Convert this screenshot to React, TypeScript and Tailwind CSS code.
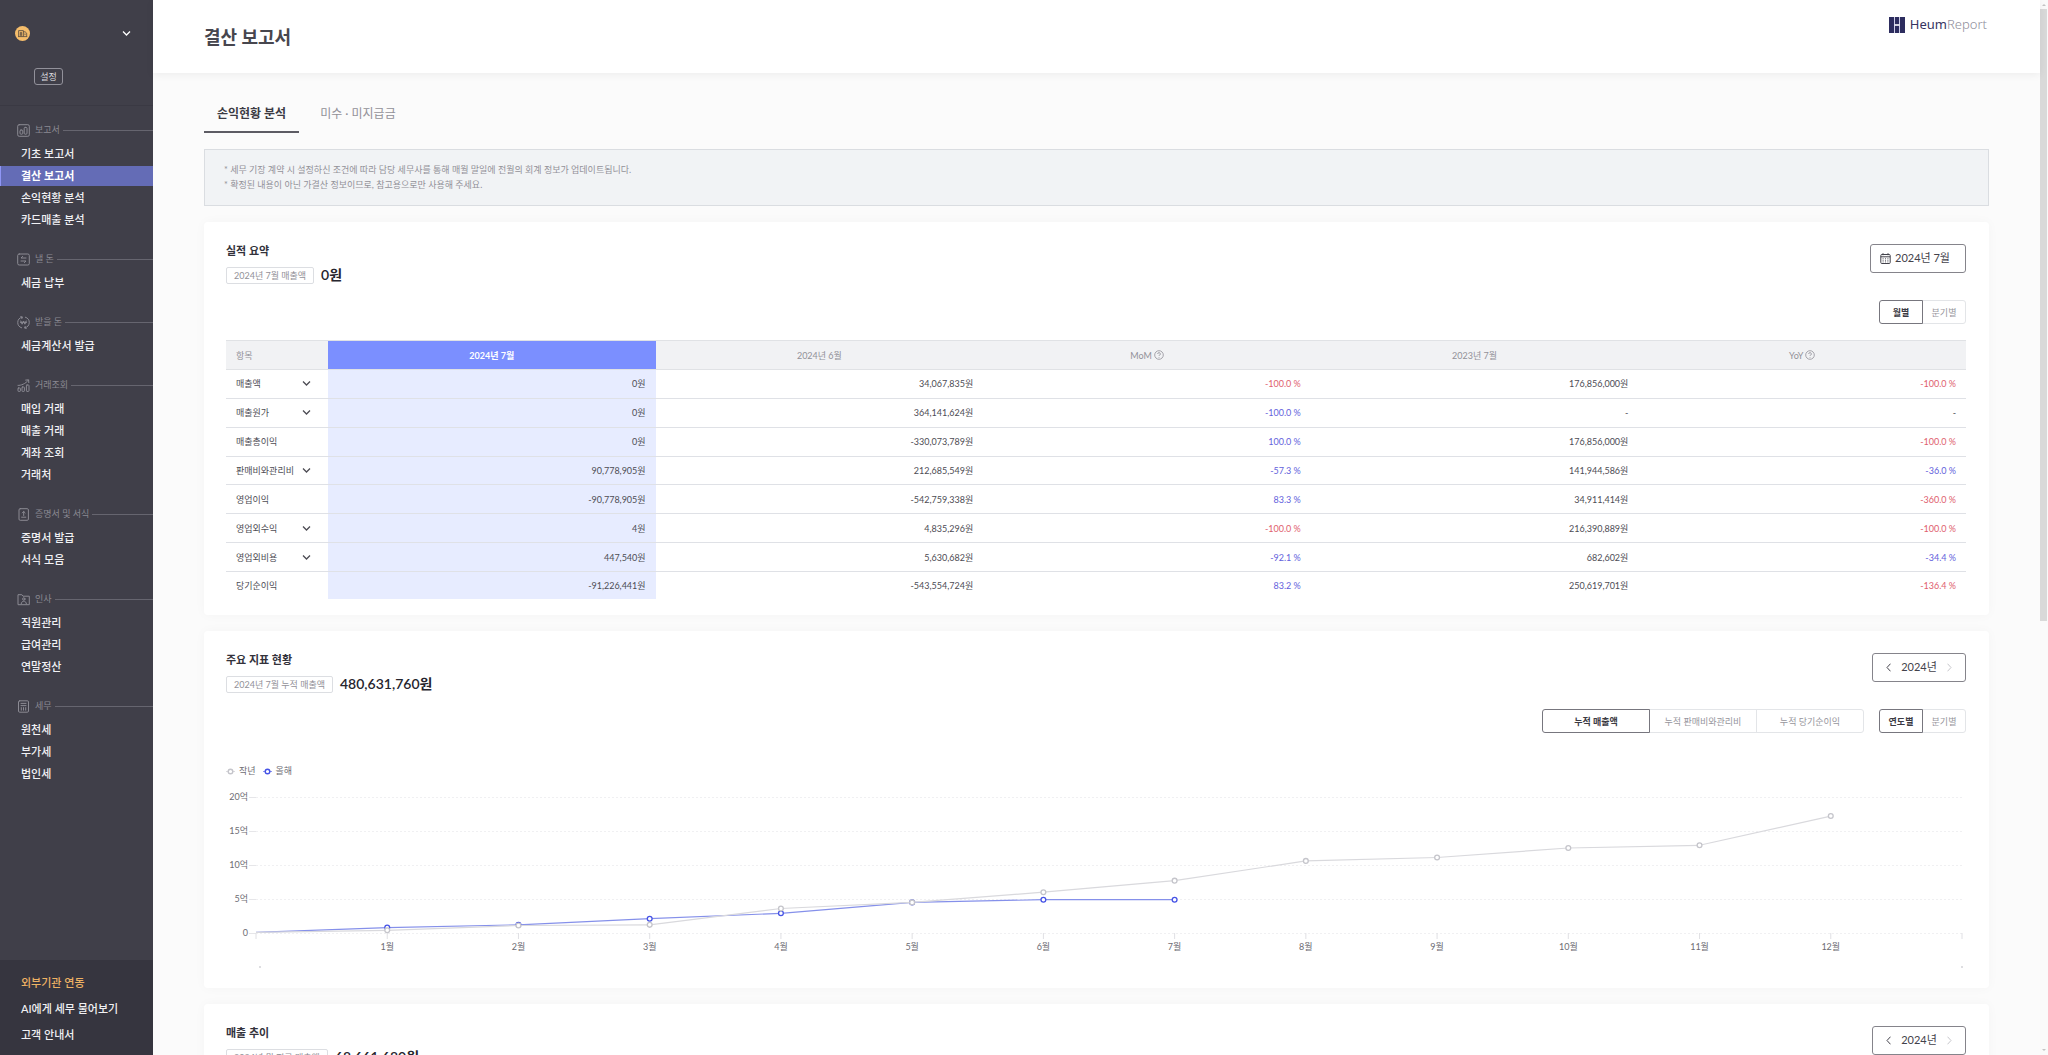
import { useState } from 'react';
import type { ReactNode } from 'react';
import { clsx } from 'clsx';

interface MenuSection {
  label: string;
  icon: ReactNode;
  items: string[];
}

interface ReportRow {
  name: string;
  expandable?: boolean;
  values: string[];
  mom: Rate;
  yoy: Rate;
}

interface Rate {
  text: string;
  tone: 'up' | 'down' | 'none';
}

/* ---------- Icons ---------- */

const MenuIcon = ({ children }: { children: ReactNode }) => (
  <svg
    viewBox="0 0 13 13"
    className="h-[13px] w-[13px] shrink-0"
    fill="none"
    stroke="currentColor"
    strokeLinecap="round"
    strokeLinejoin="round"
    aria-hidden="true"
  >
    {children}
  </svg>
);

const ChevronIcon = () => (
  <svg viewBox="0 0 9 7" className="h-[7px] w-[9px] shrink-0" fill="none" stroke="currentColor" aria-hidden="true">
    <path d="M1 1.5 4.5 5 8 1.5" strokeWidth="1.3" />
  </svg>
);

const ArrowIcon = ({ d }: { d: string }) => (
  <svg viewBox="0 0 5 9" className="h-[9px] w-[5px]" fill="none" stroke="currentColor" aria-hidden="true">
    <path d={d} />
  </svg>
);

const HelpIcon = () => (
  <svg viewBox="0 0 10 10" className="h-[10px] w-[10px]" fill="none" stroke="currentColor" aria-hidden="true">
    <circle cx="5" cy="5" r="4.3" strokeWidth="0.8" />
    <path d="M3.7 4a1.3 1.3 0 1 1 1.9 1.1c-.4.2-.6.4-.6.9M5 7v.7" strokeWidth="0.9" />
  </svg>
);

const CalendarIcon = () => (
  <svg viewBox="0 0 11 11" className="h-[11px] w-[11px]" fill="none" stroke="currentColor" aria-hidden="true">
    <rect x="0.8" y="1.5" width="9.4" height="9" rx="1" strokeWidth="1" />
    <path d="M.8 3.8h9.4M3 .2v2M8 .2v2" strokeWidth="1" />
    <path d="M2.6 5.7h6M2.6 7.3h6M2.6 8.9h6" strokeWidth="0.8" strokeDasharray="1 1.4" />
  </svg>
);

const CompanyIcon = () => (
  <svg viewBox="0 0 15 15" className="h-[15px] w-[15px]" aria-hidden="true">
    <circle cx="7.5" cy="7.5" r="7.5" fill="#f5bd6b" />
    <g fill="none" stroke="#54493f" strokeWidth="0.8">
      <path d="M3.6 10.6V4.6h4.8v6M8.4 5.8h1.7l1.6 1.4v3.4M3 10.6h9.2" />
      <path d="M5.3 10.4V6.4h1.4v4M5.3 8h1.4M10 7.4v1.8" />
    </g>
  </svg>
);

const LogoMark = () => (
  <svg viewBox="0 0 16 16" className="h-4 w-4" aria-hidden="true">
    <path d="M0 0h5v16H0zM11 0h5v16h-5zM6 0h4v7.4H6zM6 8.6h4V16H6z" fill="#2d2d5f" />
    <path d="M5.5 0v16M10.5 0v16" stroke="#b9b9de" strokeWidth="0.7" />
    <path d="M5.5 8h5" stroke="#fff" strokeWidth="1.2" />
  </svg>
);

/* ---------- Data ---------- */

const menu: MenuSection[] = [
  {
    label: '보고서',
    icon: (
      <MenuIcon>
        <rect x=".7" y=".7" width="11.6" height="11.6" rx="1.5" />
        <rect x="3" y="6" width="2.8" height="4.2" rx="1" />
        <rect x="7.2" y="3.4" width="2.8" height="6.8" rx="1" />
      </MenuIcon>
    ),
    items: ['기초 보고서', '결산 보고서', '손익현황 분석', '카드매출 분석'],
  },
  {
    label: '낼 돈',
    icon: (
      <MenuIcon>
        <rect x=".7" y="1" width="11.6" height="11" rx="1.5" />
        <path d="M9 5H4l1.6-1.6M4 8h5L7.4 9.6" />
      </MenuIcon>
    ),
    items: ['세금 납부'],
  },
  {
    label: '받을 돈',
    icon: (
      <MenuIcon>
        <path d="M5 1.2A5.5 5.5 0 0 0 4.6 11.8M8 11.8A5.5 5.5 0 0 0 8.4 1.2M3.8.6 5.4 1l-.6 1.6M9.2 12.4 7.6 12l.6-1.6" />
        <path d="M3.8 5l1.3 3.2L6.5 5l1.4 3.2L9.2 5M3.4 6.3h6.2" />
      </MenuIcon>
    ),
    items: ['세금계산서 발급'],
  },
  {
    label: '거래조회',
    icon: (
      <MenuIcon>
        <rect x="1" y="9" width="2.4" height="3.4" rx=".6" />
        <rect x="5" y="8" width="2.4" height="4.4" rx=".6" />
        <rect x="9.4" y="6" width="2.6" height="6.4" rx=".6" />
        <path d="M1 6.4c3 .2 7.5-1.6 10.4-5.2M8.7 1.1l2.9-.3.2 2.8" />
      </MenuIcon>
    ),
    items: ['매입 거래', '매출 거래', '계좌 조회', '거래처'],
  },
  {
    label: '증명서 및 서식',
    icon: (
      <MenuIcon>
        <rect x="2" y=".7" width="9.4" height="11.6" rx="1.2" />
        <path d="M6.7 3.5v4M5.3 4.9l1.4-1.4 1.4 1.4M4.6 9.2h4.2" />
      </MenuIcon>
    ),
    items: ['증명서 발급', '서식 모음'],
  },
  {
    label: '인사',
    icon: (
      <MenuIcon>
        <path d="M1 11.3V1.7h3.8l1.2 1.5h6.3v8.1z" />
        <circle cx="6.8" cy="6" r="1.2" />
        <path d="M4.2 10.8c.3-1.8 1.3-2.6 2.6-2.6s2.3.8 2.6 2.6" />
      </MenuIcon>
    ),
    items: ['직원관리', '급여관리', '연말정산'],
  },
  {
    label: '세무',
    icon: (
      <MenuIcon>
        <rect x="1.5" y=".8" width="10" height="11.4" rx="1.2" />
        <path d="M4 3.4h5M4 5.6h5M4.3 7.6v2.6M6.5 7.6v2.6M8.7 7.6v2.6" />
      </MenuIcon>
    ),
    items: ['원천세', '부가세', '법인세'],
  },
];

const up = (text: string): Rate => ({ text, tone: 'up' });
const down = (text: string): Rate => ({ text, tone: 'down' });

const rows: ReportRow[] = [
  { name: '매출액', expandable: true, values: ['0원', '34,067,835원', '176,856,000원'], mom: down('-100.0 %'), yoy: down('-100.0 %') },
  { name: '매출원가', expandable: true, values: ['0원', '364,141,624원', '-'], mom: up('-100.0 %'), yoy: { text: '-', tone: 'none' } },
  { name: '매출총이익', values: ['0원', '-330,073,789원', '176,856,000원'], mom: up('100.0 %'), yoy: down('-100.0 %') },
  { name: '판매비와관리비', expandable: true, values: ['90,778,905원', '212,685,549원', '141,944,586원'], mom: up('-57.3 %'), yoy: up('-36.0 %') },
  { name: '영업이익', values: ['-90,778,905원', '-542,759,338원', '34,911,414원'], mom: up('83.3 %'), yoy: down('-360.0 %') },
  { name: '영업외수익', expandable: true, values: ['4원', '4,835,296원', '216,390,889원'], mom: down('-100.0 %'), yoy: down('-100.0 %') },
  { name: '영업외비용', expandable: true, values: ['447,540원', '5,630,682원', '682,602원'], mom: up('-92.1 %'), yoy: up('-34.4 %') },
  { name: '당기순이익', values: ['-91,226,441원', '-543,554,724원', '250,619,701원'], mom: up('83.2 %'), yoy: down('-136.4 %') },
];

// Cumulative sales in 억, starting from the axis
const lastYear = [0.1, 0.4, 1.1, 1.2, 3.6, 4.5, 6, 7.7, 10.6, 11.1, 12.5, 12.9, 17.2];
const thisYear = [0.1, 0.8, 1.2, 2.1, 2.9, 4.5, 4.9, 4.9];

/* ---------- Sidebar ---------- */

const Sidebar = () => (
  <aside className="flex w-[153px] shrink-0 flex-col bg-[#403f49] text-[#f1f1f4]">
    <div className="h-[106px] border-b border-[#3a3943] pl-[15px] pr-[22px] pt-[26px]">
      <div className="flex items-center justify-between">
        <CompanyIcon />
        <button type="button" aria-label="회사 선택" className="text-white">
          <ChevronIcon />
        </button>
      </div>
      <button
        type="button"
        className="ml-[19px] mt-[27px] block h-[17px] w-[29px] rounded-[3px] border border-[#92919a] text-[9px] leading-[14px] text-[#d9d9de]"
      >
        설정
      </button>
    </div>

    <nav className="pt-[14px]" aria-label="주 메뉴">
      {menu.map((section) => (
        <section key={section.label} className="mb-[19px]">
          <h2 className="mb-1 flex h-5 items-center pl-[17px] text-[9px] text-[#8b8a93]">
            {section.icon}
            <span className="ml-[5px] mr-[3px]">{section.label}</span>
            <span className="h-px flex-1 bg-[#66656f]" />
          </h2>
          <ul className="flex flex-col gap-[2px]">
            {section.items.map((item) => {
              const active = item === '결산 보고서';
              return (
                <li key={item}>
                  <a
                    href="#"
                    aria-current={active ? 'page' : undefined}
                    className={clsx(
                      'block h-5 border-l pl-[20px] text-[11px] leading-5',
                      active ? 'border-[#8f96f5] bg-[#646cb6] font-bold text-white' : 'border-transparent font-medium',
                    )}
                  >
                    {item}
                  </a>
                </li>
              );
            })}
          </ul>
        </section>
      ))}
    </nav>

    <ul className="mt-auto flex flex-col gap-[6px] bg-[#36353f] pb-[10px] pl-[21px] pt-[13px] text-[11px] font-medium leading-5">
      <li><a href="#" className="text-[#eeb264]">외부기관 연동</a></li>
      <li><a href="#">AI에게 세무 물어보기</a></li>
      <li><a href="#">고객 안내서</a></li>
    </ul>
  </aside>
);

/* ---------- Shared pieces ---------- */

interface SegmentedProps {
  options: string[];
  label: string;
  wide?: boolean;
}

const Segmented = ({ options, label, wide = false }: SegmentedProps) => {
  const [selected, setSelected] = useState(options[0]);

  return (
    <div role="group" aria-label={label} className="flex">
      {options.map((option) => (
        <button
          key={option}
          type="button"
          aria-pressed={option === selected}
          onClick={() => setSelected(option)}
          className={clsx(
            '-ml-px h-6 border text-[9px] leading-none first:ml-0 first:rounded-l-[3px] last:rounded-r-[3px]',
            wide ? 'w-[108px]' : 'w-11',
            option === selected ? 'relative border-[#77767e] font-bold text-[#3c3b44]' : 'border-[#e3e5e8] text-[#96959c]',
          )}
        >
          {option}
        </button>
      ))}
    </div>
  );
};

const YearPicker = () => (
  <div className="flex h-[29px] w-[94px] items-center justify-between rounded-[3px] border border-[#85848b] px-[13px] text-[11px] text-[#43424b]">
    <button type="button" aria-label="이전 연도"><ArrowIcon d="M4.5.7 1 4.5l3.5 3.8" /></button>
    <span>2024년</span>
    <button type="button" aria-label="다음 연도" className="text-[#c6c6cb]"><ArrowIcon d="M.5.7 4 4.5.5 8.3" /></button>
  </div>
);

interface CardProps {
  title: string;
  badge: string;
  amount: string;
  picker: ReactNode;
  filters?: ReactNode;
  children?: ReactNode;
}

const Card = ({ title, badge, amount, picker, filters, children }: CardProps) => (
  <section className="mt-4 rounded-[4px] bg-white pb-4 pl-[22px] pr-[23px] pt-[22px] shadow-[0_0_12px_rgba(0,0,0,0.03)]">
    <div className="flex justify-between">
      <div>
        <h2 className="text-[11px] font-bold leading-[14px] text-[#33323b]">{title}</h2>
        <div className="mt-[7px] flex items-center gap-[7px]">
          <span className="h-[17px] rounded-[2px] border border-[#dcdee2] px-[7px] text-[9px] leading-[15px] text-[#929198]">{badge}</span>
          <strong className="text-[14px] font-semibold leading-5 text-[#26252e]">{amount}</strong>
        </div>
      </div>
      <div className="flex flex-col items-end gap-[27px]">
        {picker}
        <div className="flex gap-[15px]">{filters}</div>
      </div>
    </div>
    {children}
  </section>
);

/* ---------- Summary table ---------- */

const RateCell = ({ rate }: { rate: Rate }) => (
  <td
    className={clsx(
      'px-[10px] text-right',
      rate.tone === 'up' && 'text-[#635fdc]',
      rate.tone === 'down' && 'text-[#e0606e]',
    )}
  >
    {rate.text}
  </td>
);

const SummaryTable = () => (
  <table className="mt-4 h-[259px] w-full table-fixed border-collapse text-[9px] leading-none text-[#4d4c54]">
    <thead>
      <tr className="h-[29px] border-y border-[#e0e2e5] bg-[#f1f2f4] text-[#929198]">
        <th scope="col" className="w-[102px] px-[10px] text-left font-normal">항목</th>
        <th scope="col" className="bg-[#7b8fff] font-bold text-white">2024년 7월</th>
        <th scope="col" className="font-normal">2024년 6월</th>
        <th scope="col" className="font-normal">
          <span className="inline-flex items-center gap-[2px]">MoM <HelpIcon /></span>
        </th>
        <th scope="col" className="font-normal">2023년 7월</th>
        <th scope="col" className="font-normal">
          <span className="inline-flex items-center gap-[2px]">YoY <HelpIcon /></span>
        </th>
      </tr>
    </thead>
    <tbody>
      {rows.map((row) => (
        <tr key={row.name} className="border-b border-[#dfe1e6] last:border-b-0">
          <th scope="row" className="pl-[10px] pr-[17px] font-normal">
            <div className="flex items-center justify-between whitespace-nowrap">
              {row.name}
              {row.expandable && (
                <button type="button" aria-label={`${row.name} 펼치기`}>
                  <ChevronIcon />
                </button>
              )}
            </div>
          </th>
          <td className="bg-[#e7ecff] px-[10px] text-right">{row.values[0]}</td>
          <td className="px-[10px] text-right">{row.values[1]}</td>
          <RateCell rate={row.mom} />
          <td className="px-[10px] text-right">{row.values[2]}</td>
          <RateCell rate={row.yoy} />
        </tr>
      ))}
    </tbody>
  </table>
);

/* ---------- Line chart ---------- */

const ZERO_Y = 143;
const xAt = (month: number) => `${(month / 13) * 100}%`;
const yAt = (value: number) => ZERO_Y - value * 6.8;

const Series = ({ values, line, dot }: { values: number[]; line: string; dot: string }) => (
  <g>
    {values.slice(1).map((value, i) => (
      <line key={i} x1={xAt(i)} y1={yAt(values[i])} x2={xAt(i + 1)} y2={yAt(value)} stroke={line} strokeWidth="1.2" />
    ))}
    {values.slice(1).map((value, i) => (
      <circle key={i} cx={xAt(i + 1)} cy={yAt(value)} r="2.4" fill="#fff" stroke={dot} strokeWidth="1.3" />
    ))}
  </g>
);

const LegendMark = ({ color }: { color: string }) => (
  <svg viewBox="0 0 9 7" className="h-[7px] w-[9px]" aria-hidden="true">
    <path d="M0 3.5h9" stroke={color} strokeWidth="1" opacity="0.6" />
    <circle cx="4.5" cy="3.5" r="2.3" fill="#fff" stroke={color} strokeWidth="1.4" />
  </svg>
);

const SalesChart = () => (
  <div className="text-[9px] text-[#6d6c73]">
    <div className="mt-8 flex h-3 items-center gap-[7px]">
      <span className="flex items-center gap-1"><LegendMark color="#c5c5cb" />작년</span>
      <span className="flex items-center gap-1"><LegendMark color="#4653e6" />올해</span>
    </div>
    <div className="mt-[13px] pl-[30px] pr-1">
      <svg className="h-[182px] w-full overflow-visible" role="img" aria-label="월별 누적 매출액">
        {[20, 15, 10, 5, 0].map((tick) => (
          <g key={tick}>
            <text x="-8" y={yAt(tick) + 3} textAnchor="end" fill="#6d6c73">
              {tick ? `${tick}억` : '0'}
            </text>
            <line x1="-7" y1={yAt(tick) + 0.5} x2="0" y2={yAt(tick) + 0.5} stroke="#e6e6e9" />
            <line x1="0" y1={yAt(tick) + 0.5} x2="100%" y2={yAt(tick) + 0.5} stroke="#f0f0f2" strokeDasharray="2 2" />
          </g>
        ))}
        {Array.from({ length: 14 }, (_, month) => (
          <g key={month}>
            <line x1={xAt(month)} y1={ZERO_Y} x2={xAt(month)} y2={ZERO_Y + 6} stroke="#e0e0e4" />
            {month > 0 && month < 13 && (
              <text x={xAt(month)} y={ZERO_Y + 17} textAnchor="middle" fill="#6d6c73">{`${month}월`}</text>
            )}
          </g>
        ))}
        <Series values={thisYear} line="#8590ea" dot="#4653e6" />
        <Series values={lastYear} line="#d9d9dd" dot="#c5c5cb" />
        <circle cx="4" cy="177" r="0.8" fill="#b5b5bb" />
        <circle cx="100%" cy="177" r="0.8" fill="#b5b5bb" />
      </svg>
    </div>
  </div>
);

/* ---------- Page ---------- */

const App = () => (
  <div className="flex h-screen overflow-hidden bg-[#fbfbfb] font-['Lato','Noto_Sans_CJK_KR',sans-serif]">
    <Sidebar />

    <div className="flex min-w-0 flex-1 flex-col">
      <header className="relative flex h-[73px] shrink-0 items-start justify-between bg-white px-[51px] shadow-[0_2px_8px_rgba(0,0,0,0.06)]">
        <h1 className="pt-[23px] text-[18px] font-bold leading-7 text-[#47464e]">결산 보고서</h1>
        <a href="#" className="flex items-center gap-[5px] pr-[2px] pt-[15px] text-[13px] leading-[19px]">
          <LogoMark />
          <span className="font-['Noto_Sans',sans-serif] font-light text-[#8f8e9b]">
            <span className="font-normal text-[#35345f]">Heum</span>Report
          </span>
        </a>
      </header>

      <main className="min-h-0 flex-1 overflow-hidden px-[51px] pt-5">
        <div role="tablist" className="flex">
          <button type="button" role="tab" aria-selected="true" className="h-10 border-b-2 border-[#5d5c64] px-[13px] pt-[3px] text-[12px] font-bold text-[#3c3b44]">
            손익현황 분석
          </button>
          <button type="button" role="tab" aria-selected="false" className="h-10 border-b-2 border-transparent px-[21px] pt-[3px] text-[12px] text-[#929198]">
            미수 · 미지급금
          </button>
        </div>

        <div className="mt-4 border border-[#dadde1] bg-[#f1f3f5] pb-[13px] pl-[19px] pt-3 text-[9px] leading-[15px] text-[#929198]">
          <p>* 세무 기장 계약 시 설정하신 조건에 따라 담당 세무사를 통해 매월 말일에 전월의 회계 정보가 업데이트됩니다.</p>
          <p>* 확정된 내용이 아닌 가결산 정보이므로, 참고용으로만 사용해 주세요.</p>
        </div>

        <Card
          title="실적 요약"
          badge="2024년 7월 매출액"
          amount="0원"
          picker={
            <button type="button" className="flex h-[29px] w-24 items-center gap-1 rounded-[3px] border border-[#85848b] pl-[9px] text-[11px] text-[#43424b]">
              <CalendarIcon />
              2024년 7월
            </button>
          }
          filters={<Segmented label="조회 단위" options={['월별', '분기별']} />}
        >
          <SummaryTable />
        </Card>

        <Card
          title="주요 지표 현황"
          badge="2024년 7월 누적 매출액"
          amount="480,631,760원"
          picker={<YearPicker />}
          filters={
            <>
              <Segmented wide label="지표" options={['누적 매출액', '누적 판매비와관리비', '누적 당기순이익']} />
              <Segmented label="조회 단위" options={['연도별', '분기별']} />
            </>
          }
        >
          <SalesChart />
        </Card>

        <Card title="매출 추이" badge="2024년 월 평균 매출액" amount="68,661,680원" picker={<YearPicker />} />
      </main>
    </div>

    {/* Scroll track */}
    <div className="flex w-2 shrink-0 flex-col items-center justify-between bg-[#fafafa]" aria-hidden="true">
      <svg viewBox="0 0 8 9" className="h-[9px] w-2 shrink-0"><path d="M2 6 4 4l2 2z" fill="#c4c4c4" /></svg>
      <div className="w-full flex-1"><div className="h-[59%] w-[7px] bg-[#d9d9d9]" /></div>
      <svg viewBox="0 0 8 9" className="h-[9px] w-2 shrink-0"><path d="M2 3l2 2 2-2z" fill="#c4c4c4" /></svg>
    </div>
  </div>
);

export default App;
